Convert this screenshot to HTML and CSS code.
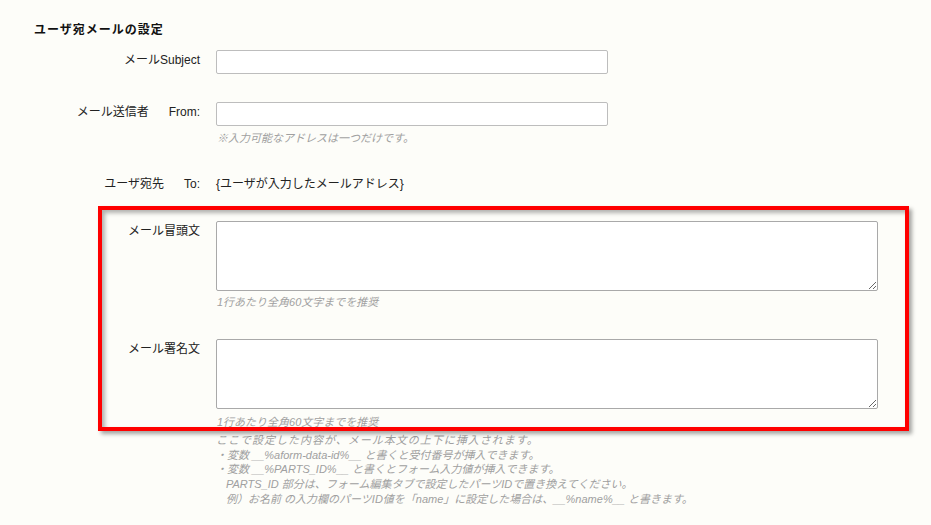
FILE: index.html
```html
<!DOCTYPE html>
<html lang="ja">
<head>
<meta charset="utf-8">
<title>ユーザ宛メールの設定</title>
<link rel="stylesheet" href="styles.css">
</head>
<body>
<div class="page">
  <h2 class="title">ユーザ宛メールの設定</h2>
  <div class="form">
    <div class="label">メールSubject</div>
    <div class="field"><input class="text" type="text"></div>

    <div class="label row-gap">メール送信者<span class="en">From:</span></div>
    <div class="field row-gap">
      <input class="text" type="text">
      <p class="hint hint-from">※入力可能なアドレスは一つだけです。</p>
    </div>

    <div class="label row-to">ユーザ宛先<span class="en">To:</span></div>
    <div class="field row-to plain">{ユーザが入力したメールアドレス}</div>

    <div class="label row-ta1">メール冒頭文</div>
    <div class="field row-ta1">
      <textarea class="area"></textarea>
      <p class="hint hint-ta1">1行あたり全角60文字までを推奨</p>
    </div>

    <div class="label row-ta2">メール署名文</div>
    <div class="field row-ta2">
      <textarea class="area"></textarea>
      <p class="hint hint-ta2">1行あたり全角60文字までを推奨</p>
      <div class="notes">
        <p class="wide">ここで設定した内容が、メール本文の上下に挿入されます。</p>
        <p>・変数 __%aform-data-id%__ と書くと受付番号が挿入できます。</p>
        <p>・変数 __%PARTS_ID%__ と書くとフォーム入力値が挿入できます。</p>
        <p class="indent">PARTS_ID 部分は、フォーム編集タブで設定したパーツIDで置き換えてください。</p>
        <p class="indent">例）お名前 の入力欄のパーツID値を「name」に設定した場合は、__%name%__ と書きます。</p>
      </div>
    </div>
  </div>
  <div class="highlight"></div>
</div>
</body>
</html>
```

FILE: styles.css
```css
html, body {
  margin: 0;
  padding: 0;
  background: #fdfdf9;
}
body {
  font-family: "Liberation Sans", "Noto Sans CJK JP", sans-serif;
  font-size: 12px;
  color: #222;
}
.page {
  position: relative;
  width: 931px;
  height: 525px;
  padding-top: 21px;
  box-sizing: border-box;
  overflow: hidden;
}
.title {
  margin: 0 0 0 34px;
  font-size: 12px;
  line-height: 18px;
  font-weight: bold;
  letter-spacing: 1px;
  color: #111;
}
.form {
  display: grid;
  grid-template-columns: 200px 662px;
  column-gap: 16px;
  margin-top: 11px;
  align-items: start;
}
.label {
  text-align: right;
  line-height: 20px;
  white-space: nowrap;
  color: #222;
}
.label .en {
  margin-left: 20px;
}
.field {
  display: flex;
  flex-direction: column;
  align-items: flex-start;
}
.row-gap { margin-top: 28px; }
.row-to { margin-top: 29px; line-height: 18px; }
.row-to.label { line-height: 18px; }
.row-ta1 { margin-top: 28px; }
.row-ta2 { margin-top: 29px; }
.plain { color: #222; }
.text {
  box-sizing: border-box;
  width: 392px;
  height: 24px;
  margin: 0;
  border: 1px solid #bdbdbd;
  border-radius: 2px;
  background: #fff;
  font: inherit;
  padding: 2px 4px;
}
.area {
  box-sizing: border-box;
  width: 662px;
  height: 70px;
  margin: 0;
  border: 1px solid #a9a9a9;
  border-radius: 2px;
  background: #fff;
  font: inherit;
  padding: 2px;
  display: block;
}
.hint {
  margin: 0;
  font-size: 11px;
  line-height: 16px;
  font-style: italic;
  color: #a0a0a0;
  padding-left: 1px;
}
.hint-from { margin-top: 4px; }
.hint-ta1 { margin-top: 3px; }
.hint-ta2 { margin-top: 5px; }
.notes {
  margin-top: 3px;
  font-size: 11px;
  line-height: 14.7px;
  font-style: italic;
  color: #a0a0a0;
  white-space: nowrap;
}
.notes p {
  margin: 0;
}
.notes .wide {
  letter-spacing: 1px;
}
.notes .indent {
  padding-left: 10px;
}
.highlight {
  position: absolute;
  left: 98px;
  top: 206px;
  width: 811px;
  height: 225px;
  box-sizing: border-box;
  border: 4px solid #ff0000;
  box-shadow: 3px 3px 4px rgba(0, 0, 0, 0.35), inset 3px 3px 4px rgba(0, 0, 0, 0.3);
  pointer-events: none;
}
```
